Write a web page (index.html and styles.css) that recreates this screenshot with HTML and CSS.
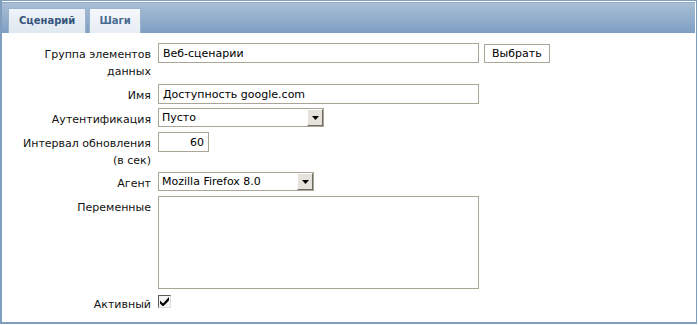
FILE: index.html
```html
<!DOCTYPE html>
<html lang="ru">
<head>
  <meta charset="UTF-8" />
  <title>Веб-сценарий</title>
  <link rel="stylesheet" href="styles.css">
</head>
<body>
  <div class="frame">
    <div class="tabs">
      <a class="tab active" href="#">Сценарий</a>
      <a class="tab" href="#">Шаги</a>
    </div>

    <div class="form">
      <div class="row">
        <label class="label">Группа элементов данных</label>
        <div class="field">
          <input class="text wide" type="text" value="Веб-сценарии" />
          <button class="btn">Выбрать</button>
        </div>
      </div>

      <div class="row">
        <label class="label">Имя</label>
        <div class="field">
          <input class="text wide" type="text" value="Доступность google.com" />
        </div>
      </div>

      <div class="row">
        <label class="label">Аутентификация</label>
        <div class="field">
          <div class="select auth">
            <span class="select-value">Пусто</span>
            <span class="select-arrow"><svg width="7" height="4" viewBox="0 0 7 4"><path d="M0 0h7L3.5 4z" fill="#000"/></svg></span>
          </div>
        </div>
      </div>

      <div class="row row-tight">
        <label class="label label-narrow">Интервал обновления (в сек)</label>
        <div class="field">
          <input class="text num" type="text" value="60" />
        </div>
      </div>

      <div class="row">
        <label class="label">Агент</label>
        <div class="field">
          <div class="select agent">
            <span class="select-value">Mozilla Firefox 8.0</span>
            <span class="select-arrow"><svg width="7" height="4" viewBox="0 0 7 4"><path d="M0 0h7L3.5 4z" fill="#000"/></svg></span>
          </div>
        </div>
      </div>

      <div class="row">
        <label class="label">Переменные</label>
        <div class="field">
          <textarea class="vars"></textarea>
        </div>
      </div>

      <div class="row">
        <label class="label">Активный</label>
        <div class="field">
          <span class="check"><svg width="9" height="9" viewBox="0 0 9 9"><path d="M0 3.5l3 3L9 0v3.5L3 9.5 0 6.5z" fill="#000"/></svg></span>
        </div>
      </div>
    </div>
  </div>
</body>
</html>
```

FILE: styles.css
```css
body {
  margin: 0;
  padding: 0;
  background: #fff;
  font-family: "DejaVu Sans", Verdana, sans-serif;
  font-size: 11px;
  color: #000;
}

.frame {
  width: 694px;
  height: 321px;
  border: 2px solid #7f9dbd;
  border-top-width: 1px;
  border-right-width: 1px;
  box-sizing: content-box;
}

.tabs {
  height: 25px;
  margin: 1px 1px 0 0;
  padding: 5px 0 0 6px;
  display: flex;
  gap: 3px;
  background: linear-gradient(#a9bfd6, #7d9ec2);
  border-top: 1px solid #90abc8;
}

.tab {
  display: block;
  height: 24px;
  line-height: 24px;
  padding: 0 9px;
  font-size: 10px;
  font-weight: bold;
  color: #4a6b92;
  text-decoration: none;
  background: linear-gradient(#f6f8fb, #e6edf4);
  border: 1px solid #9bb3cd;
  border-bottom: none;
}

.tab.active {
  color: #36557b;
  background: linear-gradient(#eef3f8, #dfe7f0);
  padding: 0 10px;
}

.form {
  padding-top: 10px;
}

.row {
  display: flex;
  gap: 7px;
  margin-bottom: 4px;
}

.row-tight {
  margin-bottom: 3px;
}

.label {
  width: 149px;
  flex: none;
  text-align: right;
  line-height: 17px;
  padding-top: 3px;
  color: #111;
}

.label-narrow {
  padding-left: 8px;
  box-sizing: border-box;
}

.field {
  display: flex;
  align-items: flex-start;
  gap: 5px;
}

.text {
  height: 20px;
  box-sizing: border-box;
  border: 1px solid #a9a696;
  padding: 0 4px;
  font-family: inherit;
  font-size: 11px;
  color: #000;
  outline: none;
}

.wide {
  width: 321px;
}

.num {
  width: 51px;
  text-align: right;
}

.btn {
  height: 19px;
  margin-top: 1px;
  padding: 0 7px;
  border: 1px solid #a9a696;
  background: #fff;
  font-family: inherit;
  font-size: 11px;
  color: #000;
}

.select {
  display: flex;
  align-items: center;
  height: 19px;
  box-sizing: border-box;
  border: 1px solid #a9a696;
  padding-left: 3px;
}

.select-value {
  flex: 1;
}

.auth {
  width: 166px;
}

.agent {
  width: 156px;
}

.select-arrow {
  width: 16px;
  height: 17px;
  display: flex;
  align-items: center;
  justify-content: center;
  background: #e4e2da;
  border: 1px solid;
  border-color: #fff #6f6d63 #6f6d63 #fff;
  box-sizing: border-box;
}

.vars {
  width: 321px;
  height: 93px;
  box-sizing: border-box;
  border: 1px solid #a9a696;
  resize: none;
  margin: 0;
  outline: none;
}

.check {
  margin-top: 2px;
  width: 13px;
  height: 13px;
  box-sizing: border-box;
  display: flex;
  align-items: center;
  justify-content: center;
  border: 1px solid;
  border-color: #5a5a5a #dcdcdc #dcdcdc #5a5a5a;
  background: #f4f4f4;
}
```
